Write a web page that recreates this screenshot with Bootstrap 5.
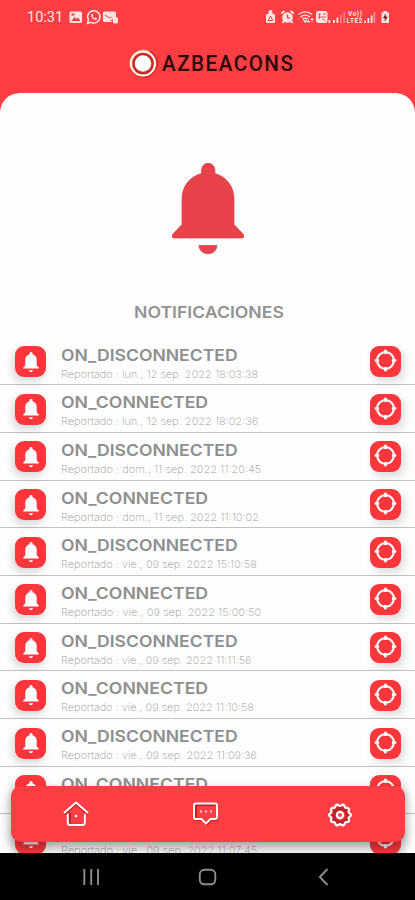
<!DOCTYPE html>
<html lang="es">
<head>
<meta charset="utf-8">
<meta name="viewport" content="width=device-width, initial-scale=1">
<title>AZBEACONS</title>
<link href="https://cdn.jsdelivr.net/npm/bootstrap@5.3.0/dist/css/bootstrap.min.css" rel="stylesheet">
<style>
  body { font-family: Inter, "Open Sans", sans-serif; background: #fe3e43; }
  .screen { width: 415px; height: 900px; background: #fe3e43; }
  .status { height: 34px; padding: 0 24px 0 27px; color: #ffe3e3; }
  .clock { font: 400 14.5px/34px Roboto, sans-serif; padding-top: 2px; }
  .brand-row { height: 59px; padding: 0 0 1px 128px; }
  .brand-name { font: 500 22px/30px Roboto, sans-serif; letter-spacing: 1.6px; color: #2b0a0c; margin: 2px 0 0 3px; }
  .sheet { height: 760px; background: #fefefe; border-radius: 20px 20px 0 0; }
  .hero { height: 209px; padding-top: 70px; }
  .heading { font-size: 16px; line-height: 20px; font-weight: 600; color: #929292; margin: 0 0 15.5px 134px; }
  .entry { height: 47.7px; padding: 8.5px 14px 0 15px; border-bottom: 1.6px solid #c2c2c2; }
  .tile { width: 31px; height: 31px; border-radius: 9px; background: #fd363c; box-shadow: -2px 4px 8px rgba(0,0,0,.17); }
  .tile-end { box-shadow: 3px 4px 8px rgba(0,0,0,.15); padding-bottom: 2px; }
  .event { font-size: 16.6px; line-height: 19px; font-weight: 600; color: #8f8f8f; }
  .stamp { font-size: 10.2px; line-height: 13px; font-weight: 200; color: #999; margin-top: 3px; }
  .texts { margin-left: 15px; margin-top: -.5px; }
  .stretch { display: inline-block; transform-origin: 0 50%; white-space: nowrap; }
  .dock { left: 11px; top: 786px; width: 394px; height: 56px; border-radius: 10px; background: #fe3e43; box-shadow: 0 5px 12px rgba(0,0,0,.4); padding: 0 51px; }
  .sysnav { height: 47px; background: #000; }
  svg { display: block; flex: none; }
</style>
</head>
<body>
<svg width="0" height="0" class="position-absolute">
  <symbol id="bell" viewBox="0 0 72 91">
    <path d="M29.500 10.500V7a6.700 6.700 0 0 1 13.400 0v3.500C54 13.500 62 23 62 36v25.500l9 9.500c2 2.300 1 4-1.500 4h-67C0 75-1 73.300 1 71l9-9.500V36C10 23 18 13.500 29.500 10.500z"/>
    <path d="M27 82.500h18c-.5 5-4 8.200-9 8.200s-8.500-3.200-9-8.200z"/>
  </symbol>
  <symbol id="target" viewBox="0 0 24 24">
    <circle cx="12" cy="12" r="8.700" fill="none" stroke="#fff" stroke-width="2.200"/>
    <path d="M12 .8v4.500M12 18.700v4.500M.8 12h4.500M18.700 12h4.500" stroke="#fff" stroke-width="2.800"/>
  </symbol>
</svg>

<main class="screen position-relative overflow-hidden d-flex flex-column">
  <div class="status d-flex align-items-center justify-content-between">
    <div class="d-flex align-items-center">
      <span class="clock stretch" data-w="36">10:31</span>
      <svg class="ms-1" width="58" height="16" viewBox="0 0 58 16">
        <rect x="2.500" y="2.500" width="12.500" height="11.500" rx="1.500" fill="#ffe3e3"/>
        <path d="M4.500 12l3-4 2 2 1.500-1.500 2.500 3.500z" fill="#fe3e43"/><path d="M4.500 4.500h3v2h-3z" fill="#fe3e43"/>
        <path d="M20.500 14.300l.9-3.500a6.200 6.200 0 1 1 2.500 2.500z" fill="none" stroke="#ffe3e3" stroke-width="1.500"/>
        <path d="M24.300 5.500c-.8 2.500 2.500 6 5.200 5.300l.6-1.500-1.600-.9-.9.800c-1-.4-1.600-1.200-2-2.100l.7-.8-.6-1.500z" fill="#ffe3e3"/>
        <rect x="36" y="2.500" width="13" height="10.500" rx="1.500" fill="#ffe3e3"/>
        <path d="M38 6l4.500 3 2-1" fill="none" stroke="#fe3e43" stroke-width="1"/>
        <rect x="46" y="8" width="5" height="6.500" rx="1.500" fill="#ffe3e3"/><path d="M45.300 9.500v4.500M43.500 11.500h2" stroke="#fe3e43" stroke-width=".8"/>
      </svg>
    </div>
    <svg width="127" height="16" viewBox="0 0 127 16" fill="#ffe3e3">
      <path d="M3 5h1.500V3a2 2 0 0 1 4 0v2H10a1 1 0 0 1 1 1v7a1 1 0 0 1-1 1H3a1 1 0 0 1-1-1V6a1 1 0 0 1 1-1z"/>
      <path d="M6.500 7l2.300 4.500H4.200z" fill="none" stroke="#fe3e43"/>
      <circle cx="23.500" cy="8.500" r="5.300"/><path d="M17.300 4.500L20.500 2M29.700 4.500L26.500 2M19.800 12l-1.300 2M27.200 12l1.300 2" stroke="#ffe3e3" stroke-width="1.800"/>
      <path d="M23.500 5.500v3.300H26" fill="none" stroke="#fe3e43" stroke-width="1.200"/>
      <path d="M34.500 5.500c4-3.500 9.500-3.500 13.500 0M36.500 8c2.800-2.300 6.500-2.300 9.500 0M38.500 10.300c1.600-1.200 3.500-1.200 5 0" fill="none" stroke="#ffe3e3" stroke-width="1.400"/>
      <path d="M39.500 11.500h3.500L41.300 14zM44.500 9.500v4m-1.500-1.500l1.500 1.800 1.500-1.800M48 13.500v-4m-1.500 1.500L48 9.300l1.500 1.700" stroke="#ffe3e3" stroke-width=".7"/>
      <rect x="52" y="2" width="11.500" height="12" rx="2.500"/><path d="M54 5h3M55.500 5v5M59 5h3M54 8h8M58.500 9.500l3 2.500" stroke="#fe3e43" stroke-width=".9"/>
      <path d="M64.500 11h1.700v3h-1.700zM69 11h1.800v3H69zM72.500 8.500h1.800V14h-1.800z"/><path d="M76 6h1.800v8H76zM79.300 3h1.700v11h-1.700z" opacity=".4"/>
      <g font-family="Roboto, sans-serif" font-weight="700" font-size="6.500"><text x="84" y="7.200" textLength="14">Vo))</text><text x="82.500" y="14" textLength="16">LTE2</text></g>
      <path d="M100.300 11.500h1.700V14h-1.700zM103.500 9h1.800v5h-1.800zM106.700 6.500h1.800V14h-1.800z"/><path d="M109.500 3h1.700v11h-1.700z" opacity=".5"/>
      <path d="M117.500 3.500h2V2h3.500v1.500h2V14h-7.500z"/><path d="M121.700 4.500l-2.800 4.700h2l-.5 3.500 3.500-5h-2z" fill="#701d22"/>
    </svg>
  </div>

  <header class="brand-row d-flex align-items-center">
    <svg width="31" height="31" viewBox="0 0 31 31">
      <circle cx="15.500" cy="15.500" r="14.300" fill="#d9231f"/>
      <path d="M2.500 19.500A13.600 13.600 0 0 1 22 3.700" fill="none" stroke="#fb7640" stroke-width="1.500"/>
      <circle cx="15" cy="15.500" r="12" fill="none" stroke="#fff4ee" stroke-width="2.300"/>
      <circle cx="15" cy="15.500" r="9.300" fill="none" stroke="#b8301f" stroke-width="1.300"/>
      <circle cx="15" cy="15.500" r="8.300" fill="#fff"/>
    </svg>
    <span class="brand-name stretch" data-w="132">AZBEACONS</span>
  </header>

  <section class="sheet overflow-hidden flex-shrink-0">
    <div class="hero d-flex justify-content-center">
      <svg width="72" height="91" fill="#e8434a" stroke="#d9363e" stroke-width=".7"><use href="#bell"/></svg>
    </div>
    <div class="d-flex"><h1 class="heading stretch" data-w="150">NOTIFICACIONES</h1></div>
    <div id="entries"></div>
  </section>

  <nav class="sysnav position-absolute bottom-0 start-0 w-100">
    <svg width="415" height="47" viewBox="0 0 415 47" fill="none" stroke="#8d8d8d" stroke-width="1.900">
      <path d="M84.300 16v16M91.200 16v16M98 16v16"/><rect x="199.800" y="16.800" width="15.500" height="14.500" rx="4.500"/><path d="M327.500 16l-7.700 8 7.700 8"/>
    </svg>
  </nav>

  <nav class="dock position-absolute d-flex align-items-center justify-content-between">
    <svg width="28" height="30" viewBox="0 0 28 30" fill="none" stroke-linejoin="round" stroke-linecap="round">
      <path d="M7.500 15v8.500q0 2.500 2.500 2.500h10q2.500 0 2.500-2.500V15" stroke="#b71f26" stroke-width="2.500"/>
      <path d="M3 14.500L14 5l11 9.500" stroke="#c8252c" stroke-width="2.500"/>
      <path d="M2.500 13.500L14 3.500l11.500 10M5.800 15.500V23.500q0 2.500 2.500 2.500h12q2.500 0 2.500-2.500v-8" stroke="#fff" stroke-width="2"/><circle cx="14" cy="17" r="1.300" fill="#fff"/>
    </svg>
    <svg class="me-1" width="28" height="26" viewBox="0 0 28 26" fill="none" stroke-linejoin="round">
      <path d="M4 4h21v15h-6l-4 4.500L11 19H4z" stroke="#b71f26" stroke-width="2"/>
      <path d="M4 2.500h19q2 0 2 2V16q0 2-2 2h-4.500L14 22.500 9.500 18H4q-2 0-2-2V4.500q0-2 2-2z" stroke="#fff" stroke-width="1.900"/>
      <path d="M8 10.500h2M13 10.500h2M18 10.500h2" stroke="#ffd3d3" stroke-width="1.800"/>
    </svg>
    <svg width="28" height="28" viewBox="0 0 28 28" fill="none">
      <circle cx="14.500" cy="15.500" r="7" stroke="#bd2229" stroke-width="4"/>
      <path id="gear" stroke="#fff" stroke-width="2.200" stroke-linejoin="round"/>
      <circle cx="14" cy="15" r="3.100" stroke="#fff" stroke-width="2.200"/>
    </svg>
  </nav>
</main>

<script src="https://cdn.jsdelivr.net/npm/bootstrap@5.3.0/dist/js/bootstrap.bundle.min.js"></script>
<script>
  // event, timestamp, rendered width of the timestamp line
  const log = [
    ["ON_DISCONNECTED", "lun., 12 sep. 2022 18:03:38", 197],
    ["ON_CONNECTED", "lun., 12 sep. 2022 18:02:36", 197],
    ["ON_DISCONNECTED", "dom., 11 sep. 2022 11:20:45", 200],
    ["ON_CONNECTED", "dom., 11 sep. 2022 11:10:02", 198],
    ["ON_DISCONNECTED", "vie., 09 sep. 2022 15:10:58", 196],
    ["ON_CONNECTED", "vie., 09 sep. 2022 15:00:50", 200],
    ["ON_DISCONNECTED", "vie., 09 sep. 2022 11:11:56", 190],
    ["ON_CONNECTED", "vie., 09 sep. 2022 11:10:58", 193],
    ["ON_DISCONNECTED", "vie., 09 sep. 2022 11:09:36", 196],
    ["ON_CONNECTED", "vie., 09 sep. 2022 11:08:51", 195],
    ["ON_DISCONNECTED", "vie., 09 sep. 2022 11:07:45", 196]
  ];
  document.getElementById("entries").innerHTML = log.map(([ev, at, w]) => `
    <div class="entry d-flex align-items-start">
      <div class="tile d-flex align-items-center justify-content-center"><svg width="16" height="20" fill="#fff"><use href="#bell"/></svg></div>
      <div class="texts flex-grow-1">
        <div class="event"><span class="stretch" data-w="${ev.length > 12 ? 177 : 147}">${ev}</span></div>
        <div class="stamp"><span class="stretch" data-w="${w}">Reportado : ${at}</span></div>
      </div>
      <div class="tile tile-end d-flex align-items-center justify-content-center"><svg width="23" height="23"><use href="#target"/></svg></div>
    </div>`).join("");
  // widen each label's letterforms to its set width
  document.querySelectorAll("[data-w]").forEach(el => {
    el.style.transform = "scaleX(" + (el.dataset.w / el.offsetWidth).toFixed(4) + ")";
  });
  // scalloped outline of the settings wheel
  let d = "";
  for (let i = 0; i <= 120; i++) {
    const a = i / 120 * 2 * Math.PI, r = 10 + .9 * Math.cos(10 * a);
    d += (i ? "L" : "M") + (14 + r * Math.cos(a)).toFixed(2) + " " + (15 + r * Math.sin(a)).toFixed(2);
  }
  document.getElementById("gear").setAttribute("d", d + "z");
</script>
</body>
</html>
